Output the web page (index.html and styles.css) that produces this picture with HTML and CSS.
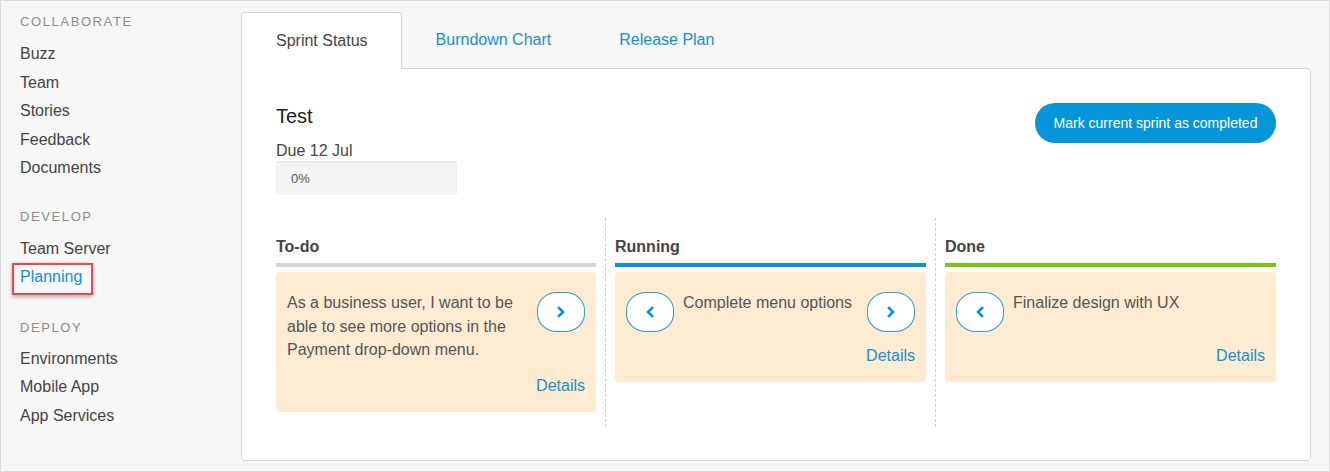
FILE: index.html
```html
<!DOCTYPE html>
<html>
<head>
<meta charset="utf-8">
<link rel="stylesheet" href="styles.css">
</head>
<body>
<div class="app">
  <aside class="sidebar">
    <div class="section">
      <div class="sec-title">COLLABORATE</div>
      <div class="item">Buzz</div>
      <div class="item">Team</div>
      <div class="item">Stories</div>
      <div class="item">Feedback</div>
      <div class="item">Documents</div>
    </div>
    <div class="section">
      <div class="sec-title">DEVELOP</div>
      <div class="item">Team Server</div>
      <div class="item"><span class="active hl">Planning</span></div>
    </div>
    <div class="section deploy">
      <div class="sec-title">DEPLOY</div>
      <div class="item">Environments</div>
      <div class="item">Mobile App</div>
      <div class="item">App Services</div>
    </div>
  </aside>
  <main class="main">
    <nav class="tabs">
      <div class="tab current">Sprint Status</div>
      <div class="tab">Burndown Chart</div>
      <div class="tab">Release Plan</div>
    </nav>
    <section class="panel">
      <div class="head">
        <div class="info">
          <div class="title">Test</div>
          <div class="due">Due 12 Jul</div>
          <div class="progress">0%</div>
        </div>
        <button class="complete">Mark current sprint as completed</button>
      </div>
      <div class="board">
        <div class="col todo">
          <div class="col-title">To-do</div>
          <div class="card">
            <div class="card-row">
              <div class="card-text">As a business user, I want to be able to see more options in the Payment drop-down menu.</div>
              <span class="move"><svg width="10" height="12" viewBox="0 0 10 12"><path d="M3 2 L7 6 L3 10" fill="none" stroke="#0b8fd6" stroke-width="2.6" stroke-linecap="square"/></svg></span>
            </div>
            <div class="details">Details</div>
          </div>
        </div>
        <div class="col running">
          <div class="col-title">Running</div>
          <div class="card">
            <div class="card-row">
              <span class="move"><svg width="10" height="12" viewBox="0 0 10 12"><path d="M7 2 L3 6 L7 10" fill="none" stroke="#0b8fd6" stroke-width="2.6" stroke-linecap="square"/></svg></span>
              <div class="card-text">Complete menu options</div>
              <span class="move"><svg width="10" height="12" viewBox="0 0 10 12"><path d="M3 2 L7 6 L3 10" fill="none" stroke="#0b8fd6" stroke-width="2.6" stroke-linecap="square"/></svg></span>
            </div>
            <div class="details">Details</div>
          </div>
        </div>
        <div class="col done">
          <div class="col-title">Done</div>
          <div class="card">
            <div class="card-row">
              <span class="move"><svg width="10" height="12" viewBox="0 0 10 12"><path d="M7 2 L3 6 L7 10" fill="none" stroke="#0b8fd6" stroke-width="2.6" stroke-linecap="square"/></svg></span>
              <div class="card-text">Finalize design with UX</div>
            </div>
            <div class="details">Details</div>
          </div>
        </div>
      </div>
    </section>
  </main>
</div>
</body>
</html>
```
FILE: styles.css
```css
* { box-sizing: border-box; }
html, body { margin: 0; padding: 0; }
body {
  font-family: "Liberation Sans", Arial, sans-serif;
  font-size: 16px;
  color: #444;
}
.app {
  width: 1330px;
  height: 472px;
  border: 1px solid #d9d9d9;
  background: #f7f7f7;
  display: flex;
  overflow: hidden;
}
.sidebar {
  width: 240px;
  flex: none;
  padding: 12px 0 0 19px;
}
.section { margin-bottom: 25px; }
.section.deploy { margin-top: 27px; }
.sec-title {
  font-size: 13px;
  line-height: 18px;
  letter-spacing: 1.6px;
  color: #8c8c8c;
  margin-bottom: 9px;
}
.deploy .sec-title { margin-bottom: 8px; }
.item {
  line-height: 28.5px;
  color: #444;
}
.active { color: #1590d8; }
.hl { position: relative; display: inline-block; }
.hl::after {
  content: "";
  position: absolute;
  left: -8px;
  right: -11px;
  top: 0;
  bottom: -3px;
  border: 2px solid #f0464b;
  box-shadow: 0 2px 4px rgba(0,0,0,0.28);
}
.main {
  flex: 1;
  display: flex;
  flex-direction: column;
  padding: 11px 18px 10px 0;
}
.tabs {
  display: flex;
  height: 56px;
}
.tab {
  height: 56px;
  line-height: 56px;
  padding: 0 34px;
  color: #1590d8;
}
.tab.current {
  height: 57px;
  background: #fff;
  border: 1px solid #d6d6d6;
  border-bottom: none;
  border-radius: 4px 4px 0 0;
  padding: 0 33px 0 34px;
  color: #444;
  position: relative;
  z-index: 1;
  margin-bottom: -1px;
}
.panel {
  flex: 1;
  min-height: 0;
  background: #fff;
  border: 1px solid #d6d6d6;
  border-radius: 0 4px 4px 4px;
  padding: 35px 34px 32px;
}
.head {
  display: flex;
  justify-content: space-between;
  align-items: flex-start;
}
.title {
  font-size: 20px;
  line-height: 24px;
  color: #222;
}
.due {
  line-height: 18px;
  margin-top: 14px;
}
.progress {
  margin-top: 1px;
  width: 181px;
  height: 34px;
  background: #f4f4f4;
  border-radius: 3px;
  box-shadow: inset 0 1px 2px rgba(0,0,0,0.08);
  font-size: 13px;
  line-height: 36px;
  padding-left: 15px;
  color: #555;
}
.complete {
  margin-top: -1px;
  height: 40px;
  width: 241px;
  border: none;
  border-radius: 20px;
  background: #0795d9;
  color: #fff;
  font-family: "Liberation Sans", Arial, sans-serif;
  font-size: 14px;
  padding: 0;
}
.board {
  margin-top: 23px;
  display: grid;
  grid-template-columns: 330px 330px 1fr;
}
.col {
  padding: 19px 9px 15px 9px;
  border-right: 1px dashed #cfcfcf;
}
.col.todo { padding-left: 0; }
.col.done { border-right: none; padding-right: 0; }
.col-title {
  font-weight: bold;
  line-height: 20px;
  color: #444;
  padding-bottom: 6px;
  border-bottom: 4px solid #d6d6d6;
}
.running .col-title { border-bottom-color: #0f8fd6; }
.done .col-title { border-bottom-color: #7ac70c; }
.card {
  margin-top: 5px;
  background: #feebd2;
  border-radius: 4px;
  padding: 18px 11px 16px 11px;
}
.card-row {
  display: flex;
  align-items: flex-start;
  gap: 9px;
}
.card-text {
  flex: 1;
  padding-top: 1px;
  line-height: 23.5px;
  color: #555;
}
.move {
  flex: none;
  margin-top: 2px;
  width: 48px;
  height: 40px;
  border: 1px solid #2a9ad9;
  border-radius: 20px / 18px;
  background: #fff;
  display: flex;
  align-items: center;
  justify-content: center;
}
.details {
  margin-top: 14px;
  text-align: right;
  line-height: 20px;
  color: #1590d8;
}
```
